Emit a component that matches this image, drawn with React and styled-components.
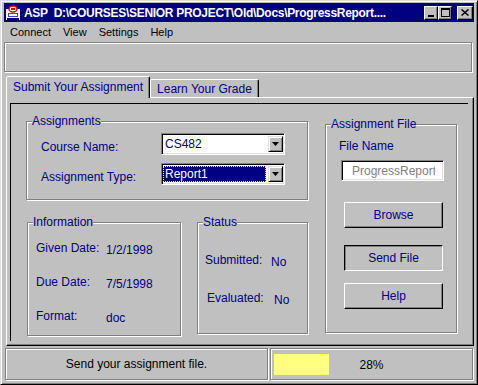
import React from 'react';
import styled, { createGlobalStyle } from 'styled-components';

const GlobalStyle = createGlobalStyle`
  html, body {
    margin: 0;
    padding: 0;
    background: #c0c0c0;
  }
  body {
    font-family: "Liberation Sans", Arial, sans-serif;
  }
  * {
    box-sizing: border-box;
  }
`;

const NAVY = '#000080';

const Window = styled.div`
  width: 478px;
  height: 385px;
  display: flex;
  flex-direction: column;
  background: #c0c0c0;
  border: 1px solid;
  border-color: #dfdfdf #000 #000 #dfdfdf;
  box-shadow: inset 1px 1px #fff, inset -1px -1px #808080;
  padding: 2px 3px 3px;
`;

const TitleBar = styled.div`
  height: 19px;
  flex: none;
  display: flex;
  align-items: center;
  background: ${NAVY};
  padding: 0 1px;
`;

const Title = styled.span`
  flex: 1;
  margin-left: 3px;
  color: #fff;
  font-weight: bold;
  font-size: 12px;
  letter-spacing: -0.3px;
  white-space: pre;
  overflow: hidden;
`;

const CaptionButton = styled.button`
  width: ${(p) => p.$w}px;
  height: 14px;
  margin-left: ${(p) => p.$gap || 0}px;
  padding: 0;
  background: #c0c0c0;
  border: 1px solid;
  border-color: #fff #000 #000 #fff;
  box-shadow: inset -1px -1px #808080;
  display: flex;
  align-items: center;
  justify-content: center;
`;

const MenuBar = styled.div`
  height: 20px;
  flex: none;
  display: flex;
  align-items: center;
`;

const MenuItem = styled.span`
  padding: 0 6px;
  font-size: 11px;
  color: #000;
`;

const ToolPanel = styled.div`
  height: 30px;
  flex: none;
  margin-right: 2px;
  border: 1px solid #808080;
  box-shadow: inset 1px 1px #fff, 1px 1px #fff;
`;

const TabStrip = styled.div`
  height: 21px;
  flex: none;
  margin-top: 4px;
  padding-left: 2px;
  display: flex;
  align-items: flex-end;
`;

const Tab = styled.div`
  height: ${(p) => (p.$active ? 22 : 18)}px;
  margin-bottom: ${(p) => (p.$active ? -1 : 0)}px;
  position: relative;
  z-index: ${(p) => (p.$active ? 1 : 0)};
  padding: 0 6px;
  display: flex;
  align-items: ${(p) => (p.$active ? 'flex-start' : 'center')};
  padding-top: ${(p) => (p.$active ? 3 : 0)}px;
  background: #c0c0c0;
  border: 1px solid;
  border-bottom: none;
  border-color: #fff #000 transparent #fff;
  border-radius: 2px 2px 0 0;
  box-shadow: inset -1px 0 #808080;
  color: ${NAVY};
  font-size: 12px;
  white-space: nowrap;
`;

const TabPanel = styled.div`
  flex: 1;
  margin-left: 2px;
  display: flex;
  border: 1px solid;
  border-color: #fff #000 #000 #fff;
  box-shadow: inset -1px -1px #808080;
  padding: 5px 5px 4px 3px;
`;

const Sunken = styled.div`
  flex: 1;
  display: flex;
  gap: 17px;
  border-top: 1px solid #000;
  border-left: 1px solid #000;
  padding: 10px 0 0 15px;
`;

const LeftColumn = styled.div`
  width: 282px;
  display: flex;
  flex-direction: column;
`;

const BottomRow = styled.div`
  display: flex;
  gap: 16px;
  margin: 15px 0 0 1px;
`;

const Group = styled.fieldset`
  margin: ${(p) => p.$mt || 0}px 0 0;
  padding: 0 0 0 5px;
  min-width: 0;
  width: ${(p) => p.$w}px;
  height: ${(p) => p.$h}px;
  border: 1px solid #808080;
  box-shadow: inset 1px 1px #fff, 1px 1px #fff;
  display: flex;
  flex-direction: column;
`;

const Legend = styled.legend`
  padding: 0;
  font-size: 12px;
  line-height: 14px;
  color: ${NAVY};
  background: #c0c0c0;
`;

const FormRow = styled.div`
  height: 22px;
  margin: ${(p) => p.$mt}px 0 0 9px;
  display: flex;
  align-items: center;
`;

const FormLabel = styled.span`
  width: 120px;
  padding-top: 5px;
  font-size: 12px;
  color: ${NAVY};
`;

const Combo = styled.div`
  width: 124px;
  height: 22px;
  display: flex;
  align-items: center;
  background: #fff;
  border: 1px solid;
  border-color: #808080 #fff #fff #808080;
  box-shadow: inset 1px 1px #000, inset -1px -1px #dfdfdf;
  padding: 1px;
`;

const ComboDisplay = styled.div`
  flex: 1;
  align-self: stretch;
  margin: 1px 0;
  display: flex;
  align-items: center;
  padding-left: 2px;
  font-size: 12px;
  color: ${(p) => (p.$selected ? '#fff' : NAVY)};
  background: ${(p) => (p.$selected ? NAVY : '#fff')};
  outline: ${(p) => (p.$selected ? '1px dotted #ffff40' : 'none')};
  outline-offset: -1px;
`;

const ComboButton = styled.div`
  width: 15px;
  height: 16px;
  margin-left: 2px;
  display: flex;
  align-items: center;
  justify-content: center;
  background: #c0c0c0;
  border: 1px solid;
  border-color: #dfdfdf #000 #000 #dfdfdf;
  box-shadow: inset 1px 1px #fff, inset -1px -1px #808080;
`;

const InfoList = styled.div`
  display: flex;
  flex-direction: column;
  gap: ${(p) => p.$gap}px;
  padding-top: ${(p) => p.$top}px;
`;

const InfoRow = styled.div`
  display: flex;
  line-height: 16px;
  margin-left: ${(p) => p.$indent}px;
  font-size: 12px;
  color: ${NAVY};
`;

const InfoLabel = styled.span`
  width: ${(p) => p.$w}px;
`;

const InfoValue = styled.span`
  margin-top: 2px;
`;

const FileGroupBody = styled.div`
  display: flex;
  flex-direction: column;
`;

const FieldCaption = styled.span`
  margin: 7px 0 0 8px;
  line-height: 16px;
  font-size: 12px;
  color: ${NAVY};
`;

const TextField = styled.div`
  width: 103px;
  height: 21px;
  margin: 6px 0 0 10px;
  display: flex;
  align-items: center;
  background: #fff;
  border: 1px solid;
  border-color: #808080 #fff #fff #808080;
  box-shadow: inset 1px 1px #000, inset -1px -1px #dfdfdf;
`;

const FieldText = styled.span`
  margin: 0 8px 0 10px;
  overflow: hidden;
  white-space: nowrap;
  font-size: 12px;
  color: #808080;
`;

const PushButton = styled.button`
  width: 99px;
  height: 26px;
  margin: ${(p) => p.$mt}px 0 0 13px;
  padding: 0;
  font-family: inherit;
  font-size: 12px;
  color: ${NAVY};
  background: #c0c0c0;
  border: 1px solid;
  border-color: ${(p) => (p.$pressed ? '#000 #fff #fff #000' : '#fff #000 #000 #fff')};
  box-shadow: ${(p) => (p.$pressed ? 'inset 1px 1px #808080' : 'inset -1px -1px #808080')};
`;

const StatusBar = styled.div`
  height: 35px;
  flex: none;
  display: flex;
  gap: 2px;
  padding: 2px 0 0 1px;
`;

const StatusPanel = styled.div`
  width: ${(p) => p.$w}px;
  height: 32px;
  display: flex;
  align-items: center;
  justify-content: ${(p) => (p.$center ? 'center' : 'flex-start')};
  padding: 0 3px;
  border: 1px solid #808080;
  box-shadow: inset 1px 1px #fff, 1px 1px #fff;
  font-size: 12px;
  color: #000;
`;

const Progress = styled.div`
  flex: 1;
  height: 21px;
  margin-top: 1px;
  display: grid;
  font-size: 12px;
`;

const ProgressFill = styled.div`
  grid-area: 1 / 1;
  background: #ffff80;
`;

const ProgressText = styled.span`
  grid-area: 1 / 1;
  align-self: center;
  justify-self: center;
`;

function AppIcon() {
  return (
    <svg width="16" height="16" viewBox="0 0 16 16">
      <rect x="1" y="4" width="14" height="11" fill="#fff" />
      <ellipse cx="8" cy="4" rx="4" ry="3" fill="#fff" stroke="#e00000" strokeWidth="1.5" />
      <rect x="6" y="3" width="4" height="2" fill="#e00000" />
      <rect x="3" y="8" width="10" height="4" fill="#4040c0" />
      <rect x="4" y="9" width="8" height="2" fill="#fff" />
      <rect x="2" y="13" width="12" height="2" fill={NAVY} />
    </svg>
  );
}

function DownArrow() {
  return (
    <svg width="7" height="4" viewBox="0 0 7 4">
      <polygon points="0,0 7,0 3.5,4" fill="#000" />
    </svg>
  );
}

export default function App() {
  const percent = 28;
  return (
    <>
      <GlobalStyle />
      <Window>
        <TitleBar>
          <AppIcon />
          <Title>{'ASP  D:\\COURSES\\SENIOR PROJECT\\Old\\Docs\\ProgressReport....'}</Title>
          <CaptionButton $w={14}>
            <svg width="8" height="8" viewBox="0 0 8 8">
              <rect x="1" y="6" width="6" height="2" fill="#000" />
            </svg>
          </CaptionButton>
          <CaptionButton $w={14}>
            <svg width="9" height="9" viewBox="0 0 9 9">
              <rect x="0.5" y="0.5" width="8" height="8" fill="none" stroke="#000" />
              <rect x="0" y="1" width="9" height="1" fill="#000" />
            </svg>
          </CaptionButton>
          <CaptionButton $w={16} $gap={5}>
            <svg width="8" height="7" viewBox="0 0 8 7">
              <path d="M0.5 0.5 L7.5 6.5 M7.5 0.5 L0.5 6.5" stroke="#000" strokeWidth="1.5" />
            </svg>
          </CaptionButton>
        </TitleBar>

        <MenuBar>
          <MenuItem>Connect</MenuItem>
          <MenuItem>View</MenuItem>
          <MenuItem>Settings</MenuItem>
          <MenuItem>Help</MenuItem>
        </MenuBar>

        <ToolPanel />

        <TabStrip>
          <Tab $active>Submit Your Assignment</Tab>
          <Tab>Learn Your Grade</Tab>
        </TabStrip>

        <TabPanel>
          <Sunken>
            <LeftColumn>
              <Group $w={282} $h={86}>
                <Legend>Assignments</Legend>
                <FormRow $mt={5}>
                  <FormLabel>Course Name:</FormLabel>
                  <Combo>
                    <ComboDisplay>CS482</ComboDisplay>
                    <ComboButton><DownArrow /></ComboButton>
                  </Combo>
                </FormRow>
                <FormRow $mt={8}>
                  <FormLabel>Assignment Type:</FormLabel>
                  <Combo>
                    <ComboDisplay $selected>Report1</ComboDisplay>
                    <ComboButton><DownArrow /></ComboButton>
                  </Combo>
                </FormRow>
              </Group>

              <BottomRow>
                <Group $w={154} $h={121}>
                  <Legend>Information</Legend>
                  <InfoList $top={11} $gap={16}>
                    <InfoRow $indent={3}>
                      <InfoLabel $w={70}>Given Date:</InfoLabel>
                      <InfoValue>1/2/1998</InfoValue>
                    </InfoRow>
                    <InfoRow $indent={3}>
                      <InfoLabel $w={70}>Due Date:</InfoLabel>
                      <InfoValue>7/5/1998</InfoValue>
                    </InfoRow>
                    <InfoRow $indent={3}>
                      <InfoLabel $w={70}>Format:</InfoLabel>
                      <InfoValue>doc</InfoValue>
                    </InfoRow>
                  </InfoList>
                </Group>
                <Group $w={111} $h={119}>
                  <Legend>Status</Legend>
                  <InfoList $top={23} $gap={20}>
                    <InfoRow $indent={2}>
                      <InfoLabel $w={66}>Submitted:</InfoLabel>
                      <InfoValue>No</InfoValue>
                    </InfoRow>
                    <InfoRow $indent={4}>
                      <InfoLabel $w={67}>Evaluated:</InfoLabel>
                      <InfoValue>No</InfoValue>
                    </InfoRow>
                  </InfoList>
                </Group>
              </BottomRow>
            </LeftColumn>

            <Group $w={132} $h={216} $mt={3}>
              <Legend>Assignment File</Legend>
              <FileGroupBody>
                <FieldCaption>File Name</FieldCaption>
                <TextField>
                  <FieldText>ProgressReport1.doc</FieldText>
                </TextField>
                <PushButton $mt={21}>Browse</PushButton>
                <PushButton $mt={17} $pressed>Send File</PushButton>
                <PushButton $mt={12}>Help</PushButton>
              </FileGroupBody>
            </Group>
          </Sunken>
        </TabPanel>

        <StatusBar>
          <StatusPanel $w={263} $center>Send your assignment file.</StatusPanel>
          <StatusPanel $w={203}>
            <Progress>
              <ProgressFill style={{ width: `${percent}%` }} />
              <ProgressText>{percent}%</ProgressText>
            </Progress>
          </StatusPanel>
        </StatusBar>
      </Window>
    </>
  );
}
